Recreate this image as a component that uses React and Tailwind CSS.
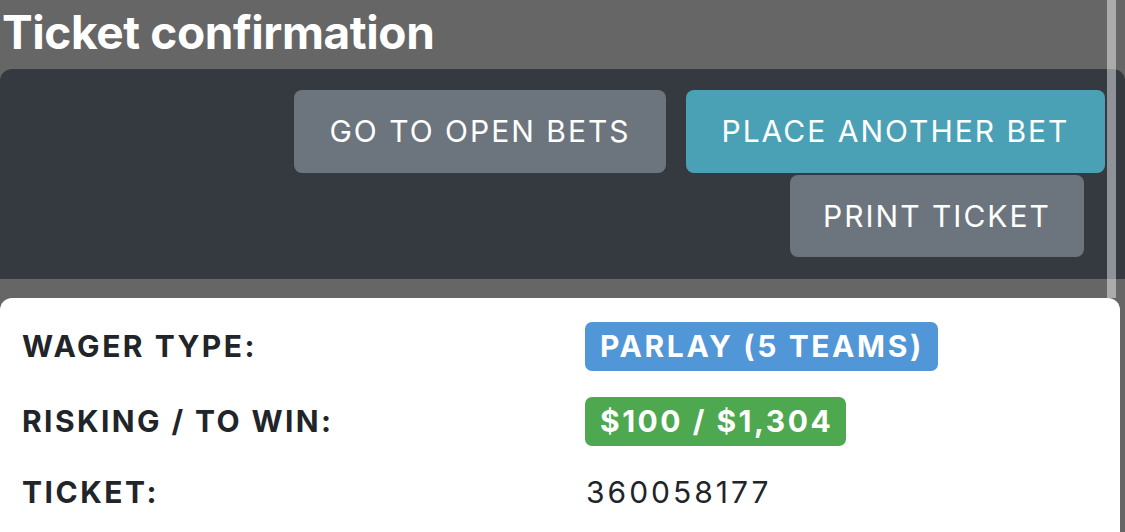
export default function App() {
  const font = { fontFamily: 'Inter, "Noto Sans", sans-serif' };
  return (
    <div className="relative w-[1125px] h-[532px] overflow-hidden bg-[#666666]" style={font}>
      <h1 className="pl-[2px] pt-[6px] h-[69px] text-[46px] leading-[52px] font-bold text-white tracking-[-0.4px]">
        Ticket confirmation
      </h1>
      <div className="bg-[#343a40] rounded-tl-[12px] rounded-tr-[12px] h-[210px] pt-[21px] flex flex-col items-end">
        <div className="flex gap-[20px] pr-[20px]">
          <button className="h-[83px] w-[372px] rounded-[8px] bg-[#6c757d] text-white text-[30px] tracking-[2px]">
            GO TO OPEN BETS
          </button>
          <button className="h-[83px] w-[419px] rounded-[8px] bg-[#4aa1b6] text-white text-[30px] tracking-[2px]">
            PLACE ANOTHER BET
          </button>
        </div>
        <div className="pr-[41px] pt-[2px]">
          <button className="h-[82px] w-[294px] rounded-[8px] bg-[#6c757d] text-white text-[30px] tracking-[2px]">
            PRINT TICKET
          </button>
        </div>
      </div>
      <div className="h-[19px]" />
      <div className="bg-white rounded-tl-[12px] rounded-tr-[12px] mr-[5px] h-[240px] pt-[24px] text-[#212529]">
        <div className="flex items-center h-[49px]">
          <div className="w-[585px] pl-[22px] text-[30px] font-bold tracking-[2.5px]">WAGER TYPE:</div>
          <span className="h-[49px] pl-[15px] pr-[14px] flex items-center rounded-[7px] bg-[#5196d6] text-white text-[30px] font-bold tracking-[2.6px]">
            PARLAY (5 TEAMS)
          </span>
        </div>
        <div className="flex items-center h-[49px] mt-[26px]">
          <div className="w-[585px] pl-[22px] text-[30px] font-bold tracking-[2.4px]">RISKING / TO WIN:</div>
          <span className="h-[49px] pl-[15px] pr-[13px] flex items-center rounded-[7px] bg-[#4ea84f] text-white text-[30px] font-bold tracking-[2.5px]">
            $100 / $1,304
          </span>
        </div>
        <div className="flex items-center h-[49px] mt-[22px]">
          <div className="w-[585px] pl-[22px] text-[30px] font-bold tracking-[2.5px]">TICKET:</div>
          <span className="text-[30px] pl-[1px] tracking-[3px]">360058177</span>
        </div>
      </div>
      <div className="absolute left-[1107px] top-0 w-[9px] h-[298px] bg-white/45" />
    </div>
  );
}
